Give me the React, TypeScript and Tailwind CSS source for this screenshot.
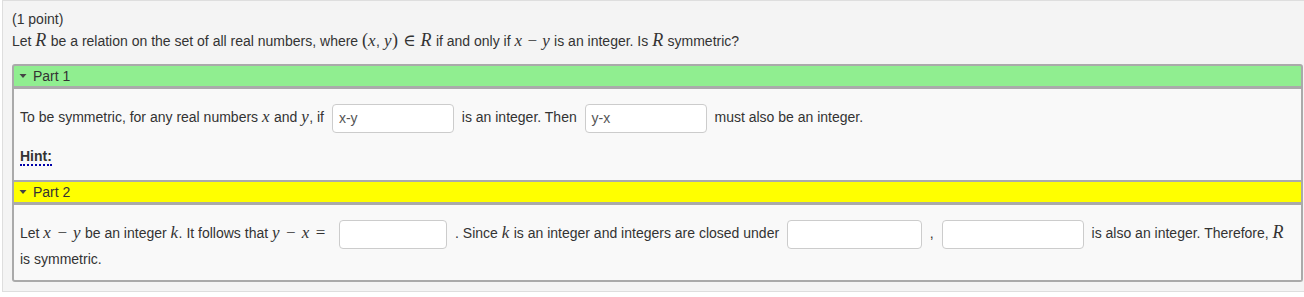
import React from "react";

const serif = '"Liberation Serif", "DejaVu Serif", serif';

const M = ({ children, big }: { children: React.ReactNode; big?: boolean }) => (
  <span className={`italic ${big ? "text-[18px]" : "text-[17px]"} tracking-[0.5px]`} style={{ fontFamily: serif }}>
    {children}
  </span>
);

const Op = ({ children, wide }: { children: React.ReactNode; wide?: boolean }) => (
  <span className={`text-[17px] ${wide ? "mx-[6px]" : "mx-[5px]"}`} style={{ fontFamily: serif }}>
    {children}
  </span>
);

const Input = ({ value, w }: { value?: string; w: string }) => (
  <span
    className={`inline-block align-middle h-[29px] ${w} mx-[4px] rounded-[4px] border border-[#cccccc] bg-white px-[6px] leading-[27px] text-[14px] text-[#555]`}
  >
    {value}
  </span>
);

const Caret = () => (
  <svg width="8" height="6" viewBox="0 0 8 6" className="inline-block mr-[6px] mb-[1px]">
    <path d="M0.5 1 L7.5 1 L4 5 Z" fill="#444" />
  </svg>
);

export default function App() {
  return (
    <div className="min-h-[297px] bg-white text-[14px] text-[#333]" style={{ fontFamily: '"Liberation Sans", Arial, sans-serif' }}>
      <div className="ml-[2px] border-t border-l border-b border-[#dedede] bg-[#f4f4f4] pl-[9px] pr-[1px] pt-[9px] pb-[9px]">
        <div className="leading-[19px]">(1 point)</div>
        <div className="leading-[22px] mt-[0px]">
          Let <M big>R</M> be a relation on the set of all real numbers, where{" "}
          <span className="text-[18px]" style={{ fontFamily: serif }}>(</span>
          <M>x</M>, <M>y</M>
          <span className="text-[18px]" style={{ fontFamily: serif }}>)</span>
          <Op>∈</Op>
          <M big>R</M> if and only if <M>x</M>
          <Op>−</Op>
          <M>y</M> is an integer. Is <M big>R</M> symmetric?
        </div>

        <div className="mt-[12px]">
          <div className="h-[25px] rounded-t-[3px] border-2 border-b-[3px] border-[#aaaaaa] bg-[#90ee90] pl-[5px] flex items-center">
            <Caret />
            <span>Part 1</span>
          </div>
          <div className="border-x-2 border-[#aaaaaa] bg-[#f9f9f9] pl-[6px] pt-[13px] h-[91px]">
            <div className="leading-[29px]">
              To be symmetric, for any real numbers <M>x</M> and <M>y</M>, if <Input value="x-y" w="w-[122px]" /> is an
              integer. Then <Input value="y-x" w="w-[122px]" /> must also be an integer.
            </div>
            <div className="mt-[14px] leading-[18px]">
              <span className="font-bold border-b-2 border-dotted border-[#0000aa]">Hint:</span>
            </div>
          </div>
          <div className="h-[25px] border-2 border-b-[3px] border-[#aaaaaa] bg-[#ffff00] pl-[5px] flex items-center">
            <Caret />
            <span>Part 2</span>
          </div>
          <div className="rounded-b-[3px] border-x-2 border-b-2 border-[#aaaaaa] bg-[#f9f9f9] pl-[6px] pr-[4px] pt-[15px] pb-[11px]">
            <div className="leading-[20px]">
              Let <M>x</M>
              <Op wide>−</Op>
              <M>y</M> be an integer <M>k</M>. It follows that <M>y</M>
              <Op wide>−</Op>
              <M>x</M>
              <Op wide>=</Op> <Input w="w-[108px]" /> . Since <M>k</M> is an integer and integers are closed under{" "}
              <Input w="w-[135px]" /> , <Input w="w-[142px]" /> is also an integer. Therefore, <M big>R</M>
              <br />
              is symmetric.
            </div>
          </div>
        </div>
      </div>
    </div>
  );
}
